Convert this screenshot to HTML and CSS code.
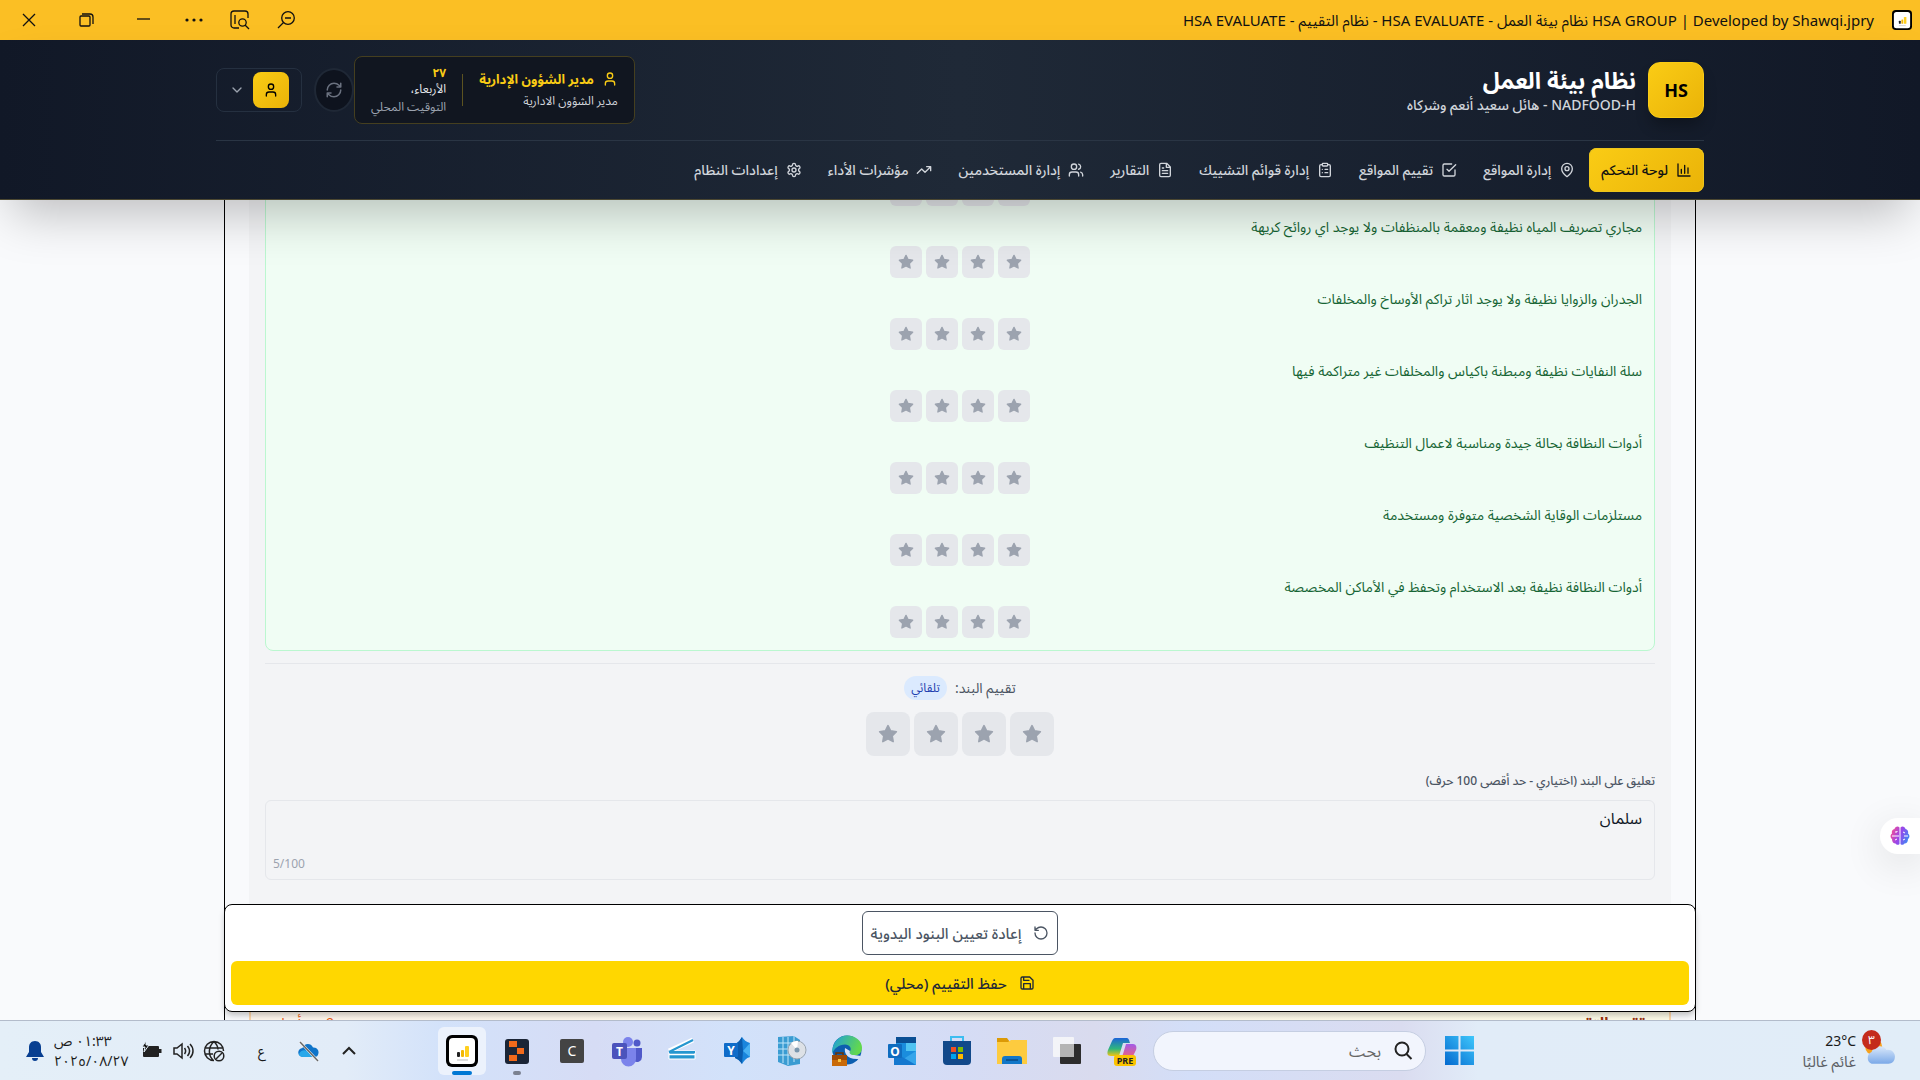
FILE: index.html
```html
<!DOCTYPE html>
<html lang="ar" dir="rtl">
<head>
<meta charset="utf-8">
<meta name="viewport" content="width=device-width, initial-scale=1">
<title>HSA EVALUATE - نظام التقييم</title>
<link rel="stylesheet" href="styles.css">
</head>
<body>
<svg class="defs" width="0" height="0" aria-hidden="true">
  <symbol id="star" viewBox="0 0 24 24"><path d="M12 2l3.09 6.26L22 9.27l-5 4.87 1.18 6.88L12 17.77l-6.18 3.25L7 14.14 2 9.27l6.91-1.01z"/></symbol>
  <symbol id="user" viewBox="0 0 24 24"><path d="M19 21v-2a4 4 0 0 0-4-4H9a4 4 0 0 0-4 4v2"/><circle cx="12" cy="7" r="4"/></symbol>
  <symbol id="app" viewBox="0 0 32 32"><rect width="32" height="32" rx="6" fill="#000"/><rect x="3" y="3" width="26" height="26" rx="4" fill="#fff"/><rect x="11" y="17" width="3" height="5" rx="1" fill="#222"/><rect x="15" y="15" width="3" height="7" rx="1" fill="#f2b705"/><rect x="19" y="11" width="4" height="11" rx="1" fill="#ffcf1f"/><path d="M11 25h11" stroke="#bbb" stroke-width="1"/></symbol>
</svg>

<div class="titlebar">
  <div class="titlebar-name">
    <svg class="i20"><use href="#app"/></svg>
    <span dir="ltr">HSA EVALUATE - نظام التقييم - HSA EVALUATE - نظام بيئة العمل HSA GROUP | Developed by Shawqi.jpry</span>
  </div>
  <div class="window-controls" dir="ltr">
    <button class="wide" aria-label="إغلاق"><svg class="i16" viewBox="0 0 16 16"><path d="M2 2l12 12M14 2L2 14"/></svg></button>
    <button class="wide" aria-label="استعادة"><svg class="i16" viewBox="0 0 16 16"><rect x="2" y="4" width="10" height="10" rx="1"/><path d="M4 2h8a3 3 0 0 1 3 3v7"/></svg></button>
    <button class="wide" aria-label="تصغير"><svg class="i16" viewBox="0 0 16 16"><path d="M2 7h13"/></svg></button>
    <button aria-label="المزيد"><svg class="i18" viewBox="0 0 18 18"><g fill="#111" stroke="none"><circle cx="2" cy="9" r="1.600"/><circle cx="9" cy="9" r="1.600"/><circle cx="16" cy="9" r="1.600"/></g></svg></button>
    <button aria-label="بحث في الصفحة"><svg class="i20" viewBox="0 0 20 20"><path d="M9 18H4a3 3 0 0 1-3-3V4a3 3 0 0 1 3-3h11a3 3 0 0 1 3 3v4M5 5v9M15 15l4 4"/><circle cx="12.500" cy="12.500" r="3.700"/></svg></button>
    <button aria-label="تصغير العرض"><svg class="i20" viewBox="0 0 20 20"><circle cx="12" cy="8" r="6.300"/><path d="M7.500 12.500L2 18M9 8h6"/></svg></button>
  </div>
</div>

<header class="header">
  <div class="container">
    <div class="topline">
      <div class="brand">
        <div class="logo">HS</div>
        <div>
          <h1>نظام بيئة العمل</h1>
          <p>NADFOOD-H - هائل سعيد أنعم وشركاه</p>
        </div>
      </div>
      <div class="account">
        <div class="user-card">
          <div class="user-info">
            <div class="user-name"><svg class="line i16"><use href="#user"/></svg><strong>مدير الشؤون الإدارية</strong></div>
            <span>مدير الشؤون الادارية</span>
          </div>
          <div class="divider"></div>
          <div class="user-date">
            <b>٢٧</b>
            <span>الأربعاء،</span>
            <small>التوقيت المحلي</small>
          </div>
        </div>
        <button class="refresh" aria-label="تحديث"><svg class="line i18" viewBox="0 0 24 24"><path d="M3 12a9 9 0 0 1 9-9 9.750 9.750 0 0 1 6.740 2.740L21 8M21 3v5h-5M21 12a9 9 0 0 1-9 9 9.750 9.750 0 0 1-6.740-2.740L3 16M8 16H3v5"/></svg></button>
        <button class="profile" aria-label="الحساب">
          <span class="avatar"><svg class="line i16"><use href="#user"/></svg></span>
          <svg class="line i16" viewBox="0 0 24 24"><path d="M6 9l6 6 6-6"/></svg>
        </button>
      </div>
    </div>
    <nav class="nav">
      <a href="#" class="active"><svg class="line i16" viewBox="0 0 24 24"><path d="M3 3v18h18M8 17v-6M13 17V5M18 17V9"/></svg>لوحة التحكم</a>
      <a href="#"><svg class="line i16" viewBox="0 0 24 24"><path d="M20 10c0 6-8 12-8 12s-8-6-8-12a8 8 0 0 1 16 0z"/><circle cx="12" cy="10" r="3"/></svg>إدارة المواقع</a>
      <a href="#"><svg class="line i16" viewBox="0 0 24 24"><path d="M9 11l3 3L22 4M21 12v7a2 2 0 0 1-2 2H5a2 2 0 0 1-2-2V5a2 2 0 0 1 2-2h11"/></svg>تقييم المواقع</a>
      <a href="#"><svg class="line i16" viewBox="0 0 24 24"><rect x="8" y="2" width="8" height="4" rx="1"/><path d="M16 4h2a2 2 0 0 1 2 2v14a2 2 0 0 1-2 2H6a2 2 0 0 1-2-2V6a2 2 0 0 1 2-2h2M12 11h4M12 16h4M8 11h.01M8 16h.01"/></svg>إدارة قوائم التشييك</a>
      <a href="#"><svg class="line i16" viewBox="0 0 24 24"><path d="M14.500 2H6a2 2 0 0 0-2 2v16a2 2 0 0 0 2 2h12a2 2 0 0 0 2-2V7.500zM14 2v6h6M16 13H8M16 17H8M10 9H8"/></svg>التقارير</a>
      <a href="#"><svg class="line i16" viewBox="0 0 24 24"><path d="M16 21v-2a4 4 0 0 0-4-4H6a4 4 0 0 0-4 4v2M22 21v-2a4 4 0 0 0-3-3.870M16 3.130a4 4 0 0 1 0 7.750"/><circle cx="9" cy="7" r="4"/></svg>إدارة المستخدمين</a>
      <a href="#"><svg class="line i16" viewBox="0 0 24 24"><path d="M22 7l-8.500 8.500-5-5L2 17M16 7h6v6"/></svg>مؤشرات الأداء</a>
      <a href="#"><svg class="line i16" viewBox="0 0 24 24"><path d="M12.220 2h-.44a2 2 0 0 0-2 2v.18a2 2 0 0 1-1 1.730l-.43.25a2 2 0 0 1-2 0l-.15-.08a2 2 0 0 0-2.730.73l-.22.38a2 2 0 0 0 .73 2.730l.15.1a2 2 0 0 1 1 1.720v.51a2 2 0 0 1-1 1.740l-.15.09a2 2 0 0 0-.73 2.730l.22.38a2 2 0 0 0 2.730.73l.15-.08a2 2 0 0 1 2 0l.43.25a2 2 0 0 1 1 1.730V20a2 2 0 0 0 2 2h.44a2 2 0 0 0 2-2v-.18a2 2 0 0 1 1-1.730l.43-.25a2 2 0 0 1 2 0l.15.08a2 2 0 0 0 2.730-.73l.22-.39a2 2 0 0 0-.73-2.730l-.15-.08a2 2 0 0 1-1-1.740v-.5a2 2 0 0 1 1-1.740l.15-.09a2 2 0 0 0 .73-2.730l-.22-.38a2 2 0 0 0-2.730-.73l-.15.08a2 2 0 0 1-2 0l-.43-.25a2 2 0 0 1-1-1.730V4a2 2 0 0 0-2-2z"/><circle cx="12" cy="12" r="3"/></svg>إعدادات النظام</a>
    </nav>
  </div>
</header>

<main class="main">
  <div class="sheet">
    <section class="panel">
      <ul class="checks">
        <li><div class="stars"><button aria-label="4"><svg><use href="#star"/></svg></button><button aria-label="3"><svg><use href="#star"/></svg></button><button aria-label="2"><svg><use href="#star"/></svg></button><button aria-label="1"><svg><use href="#star"/></svg></button></div></li>
        <li><span>مجاري تصريف المياه نظيفة ومعقمة بالمنظفات ولا يوجد اي روائح كريهة</span><div class="stars"><button aria-label="4"><svg><use href="#star"/></svg></button><button aria-label="3"><svg><use href="#star"/></svg></button><button aria-label="2"><svg><use href="#star"/></svg></button><button aria-label="1"><svg><use href="#star"/></svg></button></div></li>
        <li><span>الجدران والزوايا نظيفة ولا يوجد اثار تراكم الأوساخ والمخلفات</span><div class="stars"><button aria-label="4"><svg><use href="#star"/></svg></button><button aria-label="3"><svg><use href="#star"/></svg></button><button aria-label="2"><svg><use href="#star"/></svg></button><button aria-label="1"><svg><use href="#star"/></svg></button></div></li>
        <li><span>سلة النفايات نظيفة ومبطنة باكياس والمخلفات غير متراكمة فيها</span><div class="stars"><button aria-label="4"><svg><use href="#star"/></svg></button><button aria-label="3"><svg><use href="#star"/></svg></button><button aria-label="2"><svg><use href="#star"/></svg></button><button aria-label="1"><svg><use href="#star"/></svg></button></div></li>
        <li><span>أدوات النظافة بحالة جيدة ومناسبة لاعمال التنظيف</span><div class="stars"><button aria-label="4"><svg><use href="#star"/></svg></button><button aria-label="3"><svg><use href="#star"/></svg></button><button aria-label="2"><svg><use href="#star"/></svg></button><button aria-label="1"><svg><use href="#star"/></svg></button></div></li>
        <li><span>مستلزمات الوقاية الشخصية متوفرة ومستخدمة</span><div class="stars"><button aria-label="4"><svg><use href="#star"/></svg></button><button aria-label="3"><svg><use href="#star"/></svg></button><button aria-label="2"><svg><use href="#star"/></svg></button><button aria-label="1"><svg><use href="#star"/></svg></button></div></li>
        <li><span>أدوات النظافة نظيفة بعد الاستخدام وتحفظ في الأماكن المخصصة</span><div class="stars"><button aria-label="4"><svg><use href="#star"/></svg></button><button aria-label="3"><svg><use href="#star"/></svg></button><button aria-label="2"><svg><use href="#star"/></svg></button><button aria-label="1"><svg><use href="#star"/></svg></button></div></li>
      </ul>
      <div class="overall">
        <div class="overall-label">تقييم البند: <span class="badge">تلقائي</span></div>
        <div class="stars large"><button aria-label="4"><svg><use href="#star"/></svg></button><button aria-label="3"><svg><use href="#star"/></svg></button><button aria-label="2"><svg><use href="#star"/></svg></button><button aria-label="1"><svg><use href="#star"/></svg></button></div>
      </div>
      <label class="comment-label" for="comment">تعليق على البند (اختياري - حد أقصى 100 حرف)</label>
      <div class="comment">
        <textarea id="comment" maxlength="100">سلمان</textarea>
        <span class="count" dir="ltr">5/100</span>
      </div>
    </section>
    <div class="actions">
      <button class="reset"><svg class="line i16" viewBox="0 0 24 24"><path d="M3 12a9 9 0 1 0 9-9 9.750 9.750 0 0 0-6.740 2.740L3 8M3 3v5h5"/></svg>إعادة تعيين البنود اليدوية</button>
      <button class="save"><svg class="line i16" viewBox="0 0 24 24"><path d="M19 21H5a2 2 0 0 1-2-2V5a2 2 0 0 1 2-2h11l5 5v11a2 2 0 0 1-2 2zM17 21v-8H7v8M7 3v5h8"/></svg>حفظ التقييم (محلي)</button>
    </div>
    <div class="progress"><b>تقدم التقييم</b><span>9 من أصل</span></div>
  </div>
  <button class="assistant" aria-label="المساعد">
    <svg class="i20" viewBox="0 0 20 20"><defs><linearGradient id="brain" gradientUnits="userSpaceOnUse" x1="0" y1="4" x2="20" y2="12"><stop offset="0" stop-color="#ff4f8b"/><stop offset="0.500" stop-color="#9a45ea"/><stop offset="1" stop-color="#3b8cf5"/></linearGradient></defs><path fill="url(#brain)" d="M9.500 1.500C8-.2 5 .5 4.500 3 2 3.500 1.500 6 2 7.500 0 9 .2 12 2 13c0 3 1.500 4.500 3.500 4.500 1 1.700 3 1.700 4 .5zM10.500 1.500C12-.2 15 .5 15.500 3c2.500.5 3 3 2.500 4.500 2 1.500 1.800 4.500 0 5.500 0 3-1.500 4.500-3.500 4.500-1 1.700-3 1.700-4 .5z"/><path d="M2 10h7M5 6h2v-1M5 14l2-1M13 6l2 1M18 10h-4M13 14l2-1" stroke="#fff" stroke-width="1" fill="none"/></svg>
  </button>
</main>

<footer class="taskbar" dir="ltr">
  <div class="tray">
    <svg class="i22" viewBox="0 0 22 22"><path d="M11 1c-4 0-6 3-6 6v5l-3 5h18l-3-5V7c0-3-2-6-6-6zM8 18a3 3 0 0 0 6 0z" fill="#083f91"/></svg>
    <div class="clock"><span>٠١:٣٣ ص</span><span>٢٠٢٥/٠٨/٢٧</span></div>
    <div class="status">
      <svg class="i22" viewBox="0 0 22 22"><path d="M3 8v8h14V7H7" fill="#222" stroke="#222" stroke-width="2" stroke-linejoin="round"/><path d="M19 9v4" stroke="#222" stroke-width="3"/><path d="M5 1L1 7h3l-1 5 5-7H5z" fill="#111" stroke="#e4eff8" stroke-width="1"/></svg>
      <svg class="i22 ink" viewBox="0 0 22 22"><path d="M2 8v6h3l5 4V4L5 8zM12.500 8c1.500 2 1.500 4 0 6M15.500 6c2.500 3 2.500 7 0 10M18 4c4 4 4 10 0 14"/></svg>
      <svg class="i22 ink" viewBox="0 0 22 22"><path d="M11 20.500A9.500 9.500 0 1 1 20.500 11M2 8h18M2 14h8M11 1.500C5 7 5 15 10 20M11 1.500c3 3 4 5 4 8"/><circle cx="16" cy="16" r="4.800"/><path d="M13 19l6-6"/></svg>
    </div>
    <span class="lang">ع</span>
    <svg class="i22" viewBox="0 0 22 22"><path d="M5 17a4.500 4.500 0 0 1-.5-9C6 3 13 2.500 15 7.500c4-.5 6 3 5.500 5.500-.5 3-2 4-4 4z" fill="#0f74c9"/><path d="M1 14c1-3 5-5 8-3l9 6H5c-2 0-4-1-4-3z" fill="#28a8ea"/><path d="M2 2l18 19" stroke="#fff" stroke-width="2.500"/><path d="M2 2l18 19" stroke="#666" stroke-width="1.500"/></svg>
    <svg class="i22 ink chevron" viewBox="0 0 22 22"><path d="M5 14l6-6 6 6"/></svg>
  </div>
  <div class="apps">
    <button class="task current" aria-label="HSA"><svg viewBox="0 0 32 32"><use href="#app"/></svg></button>
    <button class="task running" aria-label="مشغل"><svg viewBox="0 0 32 32"><rect x="4" y="4" width="24" height="25" rx="3" fill="#1b2536"/><path d="M8 6h8v6H8zM16 13h7v6h-7zM8 20h8v6H8z" fill="#f26a1b"/></svg></button>
    <button class="task" aria-label="C"><span class="c-tile">C</span></button>
    <button class="task" aria-label="Teams"><svg viewBox="0 0 32 32"><circle cx="17" cy="7" r="5" fill="#7b83eb"/><circle cx="26" cy="8" r="3.500" fill="#5059c9"/><path d="M20 13h11v9a5 5 0 0 1-8 4z" fill="#5059c9"/><path d="M10 13h15v11a7 7 0 0 1-15 0z" fill="#7b83eb"/><rect x="1" y="8" width="15" height="16" rx="2" fill="#4b53bc"/><text x="8.500" y="20.500" class="glyph">T</text></svg></button>
    <button class="task" aria-label="Scan"><svg viewBox="0 0 32 32"><path d="M3 16L27 5" stroke="#fff" stroke-width="5"/><path d="M3 16h26v8H3z" fill="#2596cf" stroke="#fff" stroke-width="1"/><path d="M3 17L27 5M3 17h26" stroke="#2596cf" stroke-width="2"/><path d="M3 19.500h26" stroke="#fff" stroke-width="1.500"/></svg></button>
    <button class="task" aria-label="Yammer"><svg viewBox="0 0 32 32"><path d="M21 2c2 3 4 5 8 6v14c-4 1-6 4-8 7-2-3-4-5-7-6V9c4-2 5-4 7-7z" fill="#1a85dc"/><path d="M21 2l1 14-1 13c-2-3-4-5-7-6V9c4-2 5-4 7-7z" fill="#0a5cae"/><path d="M22 16l7-8v14z" fill="#48b0f2"/><rect x="3" y="8" width="14" height="14" rx="1" fill="#0f6cc9"/><text x="10" y="19.500" class="glyph">Y</text></svg></button>
    <button class="task" aria-label="برامج"><svg viewBox="0 0 32 32"><path d="M2 2l16-1 6 4v24l-12 2-10-4z" fill="#3a9cd2"/><path d="M2 8h16M2 14h16M2 20h14M7 2v26M12 2v28M18 1v26" stroke="#bfe6fa" stroke-width="1"/><circle cx="21" cy="15" r="9" fill="#dde1e6" stroke="#9aa5b0"/><path d="M21 15l-6-7a9 9 0 0 1 7-2z" fill="#fff"/><circle cx="21" cy="15" r="2.500" fill="#7996ad"/></svg></button>
    <button class="task" aria-label="Edge"><svg viewBox="0 0 32 32"><defs><linearGradient id="edge" x1="0" y1="0" x2="1" y2="0.300"><stop offset="0" stop-color="#1a9de0"/><stop offset="1" stop-color="#62d84e"/></linearGradient></defs><circle cx="16" cy="15" r="14.500" fill="#0d5eaf"/><path d="M1 19C1 7 8 .5 16 .5c9 0 15 6 15 12 0 5-3 8-8 8-4 0-6-2-4-4 2-3 0-7-5-7-6 0-11 4-13 9.500z" fill="url(#edge)"/><path d="M14 13c-1 5 2 12 14 11l2-3-7-1c-4 0-5-2-4-4z" fill="#d6e2f8"/><path d="M1 20h15v11H1z" fill="#c96a08"/><path d="M1 20h15v5H1z" fill="#9c4a06"/><path d="M5 20v-2h7v2" stroke="#6d3304" stroke-width="1.500" fill="none"/><rect x="7" y="24" width="3" height="3" fill="#f9c440"/></svg></button>
    <button class="task" aria-label="Outlook"><svg viewBox="0 0 32 32"><path d="M10 2h20v28H10z" fill="#1a8ddd"/><path d="M10 2h20v6H10z" fill="#0a4f94"/><path d="M20 8h10v8H20z" fill="#50c4f2"/><path d="M8 30l22-14v14z" fill="#35a5ea"/><path d="M8 17l22 13H8z" fill="#1478cf"/><rect x="2" y="9" width="14" height="14" rx="1" fill="#0f6cbf"/><text x="9" y="20.500" class="glyph">O</text></svg></button>
    <button class="task" aria-label="Store"><svg viewBox="0 0 32 32"><path d="M10 7V2h12v5" stroke="#3dbdf0" stroke-width="2" fill="none"/><path d="M2 6h28v20a4 4 0 0 1-4 4H6a4 4 0 0 1-4-4z" fill="#12498a"/><path d="M10 12h5v5h-5z" fill="#f25022"/><path d="M17 12h5v5h-5z" fill="#7fba00"/><path d="M10 19h5v5h-5z" fill="#00a4ef"/><path d="M17 19h5v5h-5z" fill="#ffb900"/></svg></button>
    <button class="task" aria-label="الملفات"><svg viewBox="0 0 32 32"><path d="M1 3h10l3 4H1z" fill="#dc9a06"/><path d="M1 7h11l3-2h16v24H1z" fill="#fdcb3f"/><path d="M6 29v-5a3 3 0 0 1 3-3h14a3 3 0 0 1 3 3v5z" fill="#1277c8"/><path d="M10 25h12" stroke="#0a4a85" stroke-width="1.500"/></svg></button>
    <button class="task" aria-label="عرض المهام"><svg viewBox="0 0 32 32"><rect x="9" y="9" width="21" height="20" rx="1" fill="#2d2d2d"/><rect x="2" y="2" width="21" height="20" rx="1" fill="#fafafa" opacity="0.800"/><rect x="9" y="9" width="14" height="13" fill="#b4b4b4"/></svg></button>
    <button class="task" aria-label="Copilot"><svg viewBox="0 0 32 32"><defs><linearGradient id="cp1" x1="0" y1="0" x2="0" y2="1"><stop offset="0" stop-color="#1c64d8"/><stop offset="0.600" stop-color="#2eb67d"/><stop offset="1" stop-color="#f3c511"/></linearGradient><linearGradient id="cp2" x1="0" y1="0" x2="0" y2="1"><stop offset="0" stop-color="#a25be8"/><stop offset="1" stop-color="#f7656f"/></linearGradient></defs><path d="M9 3h11c3 0 3 2 4 5h-7l-4 13H5c-4 0-4-3-3-6L6 6c1-2 2-3 3-3z" fill="url(#cp1)"/><path d="M20 9h7c3 0 4 3 3 6l-3 6c-1 2-2 3-5 3H12c3 0 4-2 5-5z" fill="url(#cp2)"/><rect x="8" y="20" width="22" height="11" rx="3" fill="#fbc400"/><text x="19" y="29" class="glyph pre">PRE</text></svg></button>
    <label class="search" dir="rtl">
      <svg viewBox="0 0 20 20" class="i20"><circle cx="9" cy="8" r="6.500"/><path d="M13.500 13l5 5"/></svg>
      <input type="text" placeholder="بحث" aria-label="بحث">
    </label>
    <button class="start" aria-label="ابدأ"><svg viewBox="0 0 28 28"><defs><linearGradient id="win" x1="0" y1="1" x2="1" y2="0"><stop offset="0" stop-color="#0369cf"/><stop offset="1" stop-color="#3fc7fb"/></linearGradient></defs><path d="M0 0h13v13H0zM15 0h13v13H15zM0 15h13v13H0zM15 15h13v13H15z" fill="url(#win)"/></svg></button>
  </div>
  <div class="weather">
    <div class="weather-text"><span>23°C</span><small>غائم غالبًا</small></div>
    <div class="weather-icon">
      <svg viewBox="0 0 32 32"><defs><linearGradient id="cloud" x1="0" y1="0" x2="0" y2="1"><stop offset="0" stop-color="#dbe9fb"/><stop offset="1" stop-color="#7ba9e8"/></linearGradient></defs><circle cx="11" cy="12" r="8" fill="#f6a21c"/><path d="M9 28a6 6 0 0 1 0-11c2-7 12-7 14-2 5-1 8 3 8 6 0 5-3 7-6 7z" fill="url(#cloud)"/></svg>
      <span class="alert">٣</span>
    </div>
  </div>
</footer>
</body>
</html>
```
FILE: styles.css
```css
* { box-sizing: border-box; }

body {
  margin: 0;
  height: 100vh;
  display: flex;
  flex-direction: column;
  overflow: hidden;
  background: #f9fafc;
  color: #111827;
  font-family: "Noto Sans", "Noto Sans Arabic", "DejaVu Sans Condensed", sans-serif;
  font-size: 14px;
  line-height: 24px;
}

button, textarea, input { font: inherit; color: inherit; }
button { border: 0; padding: 0; background: none; display: flex; align-items: center; justify-content: center; }
svg { display: block; flex: none; }
h1, p, ul { margin: 0; padding: 0; }
ul { list-style: none; }

.defs { position: absolute; }
.i16 { width: 16px; height: 16px; }
.i18 { width: 18px; height: 18px; }
.i20 { width: 20px; height: 20px; }
.i22 { width: 22px; height: 22px; }
.line { fill: none; stroke: currentColor; stroke-width: 2; stroke-linecap: round; stroke-linejoin: round; }

/* Window title bar */
.titlebar {
  height: 40px;
  flex: none;
  display: flex;
  align-items: center;
  justify-content: space-between;
  padding-right: 8px;
  background: #fbbf24;
}
.titlebar-name { display: flex; align-items: center; gap: 18px; font-size: 15px; color: #111; }
.window-controls { display: flex; }
.window-controls button { width: 46px; height: 40px; }
.window-controls .wide { width: 57px; }
.window-controls svg { fill: none; stroke: #111; stroke-width: 1.3; }

/* Application header */
.header {
  position: relative;
  z-index: 2;
  flex: none;
  background: linear-gradient(90deg, #111827, #1f2937 50%, #111827);
  border-bottom: 1px solid #4b4731;
  box-shadow: 0 25px 50px -12px rgba(0, 0, 0, .25);
}
.container { max-width: 1536px; margin: 0 auto; padding: 0 24px; }
.topline {
  display: flex;
  align-items: center;
  justify-content: space-between;
  padding: 16px 0;
  border-bottom: 1px solid #2a3544;
}
.brand { display: flex; align-items: center; gap: 12px; }
.logo {
  width: 56px;
  height: 56px;
  display: flex;
  align-items: center;
  justify-content: center;
  border: 1px solid #facc15;
  border-radius: 12px;
  background: linear-gradient(135deg, #facc15, #eab308);
  box-shadow: 0 10px 15px -3px rgba(0, 0, 0, .3);
  color: #000;
  font-size: 18px;
  font-weight: 700;
}
.brand h1 { color: #fff; font-size: 23px; line-height: 30px; font-weight: 700; }
.brand p { color: #d1d5db; line-height: 20px; font-weight: 500; }
.account { display: flex; align-items: center; }
.user-card {
  display: flex;
  align-items: center;
  gap: 16px;
  height: 68px;
  padding: 0 16px;
  border: 1px solid #453f1f;
  border-radius: 8px;
  background: #111620;
}
.user-info { display: flex; flex-direction: column; font-size: 12px; line-height: 22px; color: #d1d5db; }
.user-name { display: flex; align-items: center; gap: 8px; color: #facc15; font-size: 13px; }
.divider { width: 1px; height: 32px; background: #5c5320; }
.user-date {
  display: flex;
  flex-direction: column;
  padding-top: 2px;
  color: #e5e7eb;
  font-size: 12px;
  line-height: 18px;
}
.user-date b { color: #facc15; line-height: 14px; }
.user-date small { font-size: 12px; color: #9ca3af; }
.refresh {
  width: 40px;
  height: 44px;
  border: 2px solid #1f2836;
  border-radius: 50%;
  background: #0e131e;
  color: #6b7280;
}
.profile {
  gap: 8px;
  height: 44px;
  margin-right: 12px;
  padding: 0 12px;
  border: 1px solid #253040;
  border-radius: 8px;
  color: #9ca3af;
}
.avatar {
  width: 36px;
  height: 36px;
  display: flex;
  align-items: center;
  justify-content: center;
  border-radius: 8px;
  background: linear-gradient(135deg, #facc15, #eab308);
  color: #000;
}
.nav { display: flex; gap: 2px; padding: 7px 0; }
.nav a {
  display: flex;
  align-items: center;
  gap: 8px;
  height: 44px;
  padding: 0 12px;
  border-radius: 8px;
  color: #d1d5db;
  font-weight: 500;
  text-decoration: none;
  white-space: nowrap;
}
.nav .active { background: linear-gradient(135deg, #facc15, #eab308); box-shadow: inset 0 0 0 1px #ecc51c; color: #111; }

/* Evaluation sheet, scrolled to its end */
.main {
  position: relative;
  flex: 1;
  min-height: 0;
  display: flex;
  flex-direction: column;
  justify-content: flex-end;
  align-items: center;
  overflow: hidden;
  padding: 0 224px;
}
.sheet { width: 100%; border: solid #000; border-width: 0 1px; }
.panel { margin: 0 24px; padding: 16px 16px 24px; background: #f3f4f6; }
.checks {
  display: flex;
  flex-direction: column;
  gap: 9px;
  padding: 12px;
  border: 1px solid #bbf7d0;
  border-radius: 8px;
  background: #f0fdf4;
  color: #166534;
}
.checks li { display: flex; flex-direction: column; gap: 7px; }
.stars { display: flex; justify-content: center; gap: 4px; }
.stars button { width: 32px; height: 32px; border-radius: 6px; background: #e5e7eb; }
.stars svg { width: 16px; height: 16px; fill: #9ca3af; stroke: #9ca3af; stroke-width: 2; stroke-linejoin: round; }
.stars.large button { width: 44px; height: 44px; border-radius: 8px; }
.stars.large svg { width: 20px; height: 20px; }
.overall {
  display: flex;
  flex-direction: column;
  gap: 12px;
  margin-top: 12px;
  padding-top: 12px;
  border-top: 1px solid #e5e7eb;
}
.overall-label { display: flex; justify-content: center; gap: 8px; color: #4b5563; }
.badge { padding: 0 7px; border-radius: 12px; background: #dbeafe; color: #1e40af; font-size: 12px; }
.comment-label { display: block; margin: 17px 0 11px; color: #4b5563; font-size: 12px; line-height: 16px; font-weight: 500; }
.comment { position: relative; display: flex; }
.comment textarea {
  width: 100%;
  height: 80px;
  padding: 4px 12px;
  border: 1px solid #e5e7eb;
  border-radius: 6px;
  background: transparent;
  font-size: 16px;
  line-height: 26px;
  resize: none;
}
.count { position: absolute; left: 8px; bottom: 8px; color: #9ca3af; font-size: 12px; line-height: 16px; }
.actions {
  position: relative;
  z-index: 1;
  display: flex;
  flex-direction: column;
  align-items: center;
  gap: 6px;
  margin: 0 -1px;
  padding: 6px;
  border: 1px solid #000;
  border-radius: 8px;
  background: #fff;
  box-shadow: 0 4px 6px -1px rgba(0, 0, 0, .25);
}
.actions button { height: 44px; border-radius: 6px; gap: 12px; padding: 0 8px; font-size: 15px; font-weight: 500; }
.actions .reset { border: 1px solid #4b5563; color: #4b5563; }
.actions .save { width: 100%; background: #ffd700; color: #1f2937; }
.progress {
  display: flex;
  justify-content: space-between;
  height: 8px;
  margin: 0 24px;
  padding: 0 24px;
  overflow: hidden;
  border: solid #fed7aa;
  border-width: 0 2px;
  background: linear-gradient(90deg, #fff7ed, #fefce8);
  color: #9a3412;
  font-size: 16px;
  line-height: 22px;
}
.progress span { color: #ea580c; font-size: 14px; }

.assistant {
  position: absolute;
  right: 0;
  top: 618px;
  width: 40px;
  height: 36px;
  border-radius: 18px 0 0 18px;
  background: #fff;
  box-shadow: 0 10px 40px rgba(0, 0, 0, .12);
}

/* System taskbar */
.taskbar {
  position: relative;
  z-index: 3;
  flex: none;
  height: 60px;
  display: flex;
  align-items: center;
  padding: 0 24px;
  border-top: 1px solid #b3bccb;
  background: linear-gradient(90deg, #e4eff8 0, #e2ecf8 18%, #d3e2fa 23%, #d6dcf5 31%, #d2e2fa 38%, #d5dcf5 50%, #d9dbee 57%, #d3def8 62%, #dadcf0 73%, #e1ecf8 77%, #e1edf8);
  color: #1a1a1a;
}
.tray { display: flex; align-items: center; width: 336px; }
.clock { display: flex; flex-direction: column; width: 80px; margin-left: 8px; font-size: 14px; line-height: 20px; white-space: nowrap; }
.clock span { direction: rtl; text-align: left; }
.status { display: flex; gap: 9px; margin-left: 8px; }
.ink { fill: none; stroke: #222; stroke-width: 1.5; }
.lang { width: 74px; text-align: center; }
.chevron { margin-left: 18px; stroke-width: 2; }
.apps { display: flex; align-items: center; margin-left: 78px; }
.task { position: relative; width: 48px; height: 48px; margin-right: 7px; border-radius: 6px; }
.task svg { width: 32px; height: 32px; }
.current { background: #ecf2fc; }
.current::after, .running::after { content: ""; position: absolute; bottom: 0; width: 20px; height: 4px; border-radius: 2px; background: #0078d4; }
.running::after { width: 8px; background: #7b8190; }
.glyph { fill: #fff; font: 700 12px "Noto Sans", sans-serif; text-anchor: middle; }
.glyph.pre { fill: #222; font-size: 9px; }
.c-tile { width: 24px; height: 24px; border-radius: 2px; background: #444; color: #fff; line-height: 24px; }
.search {
  display: flex;
  align-items: center;
  gap: 12px;
  width: 273px;
  height: 40px;
  padding: 0 12px;
  border: 1px solid #c5cee2;
  border-radius: 20px;
  background: #f2f5fd;
}
.search svg { fill: none; stroke: #222; stroke-width: 2; }
.search input { width: 100%; min-width: 0; padding: 0; border: 0; outline: 0; background: none; font-size: 16px; }
.search input::placeholder { color: #666; opacity: 1; }
.start { width: 30px; margin-left: 18px; }
.start svg { width: 29px; height: 29px; }
.weather { display: flex; align-items: center; gap: 6px; margin-left: auto; }
.weather-text { display: flex; flex-direction: column; align-items: flex-end; line-height: 20px; }
.weather-text small { font-size: 15px; color: #5c6066; }
.weather-icon { position: relative; }
.weather-icon svg { width: 34px; height: 34px; }
.alert {
  position: absolute;
  left: 0;
  top: -4px;
  width: 19px;
  height: 20px;
  border-radius: 50%;
  background: #c42b1c;
  color: #fff;
  font-size: 12px;
  line-height: 20px;
  text-align: center;
}
```
